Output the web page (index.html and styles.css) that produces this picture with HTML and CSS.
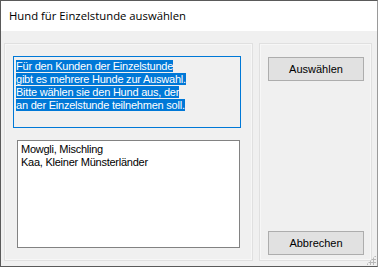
FILE: index.html
```html
<!DOCTYPE html>
<html lang="de">
<head>
    <meta charset="UTF-8">
    <title>Hund für Einzelstunde auswählen</title>
    <link rel="stylesheet" href="styles.css">
</head>
<body>
    <div class="dialog">
        <div class="title-bar">Hund für Einzelstunde auswählen</div>

        <div class="client">
            <div class="panel panel-left">
                <div class="info-box">
                    <span class="sel">Für den Kunden der Einzelstunde</span><br>
                    <span class="sel">gibt es mehrere Hunde zur Auswahl.</span><br>
                    <span class="sel">Bitte wählen sie den Hund aus, der</span><br>
                    <span class="sel">an der Einzelstunde teilnehmen soll.</span>
                </div>

                <ul class="dog-list">
                    <li>Mowgli, Mischling</li>
                    <li>Kaa, Kleiner Münsterländer</li>
                </ul>
            </div>

            <div class="panel panel-right">
                <button class="btn">Auswählen</button>
                <button class="btn">Abbrechen</button>
            </div>
        </div>

        <div class="grip"></div>
    </div>
</body>
</html>
```

FILE: styles.css
```css
* {
    margin: 0;
    padding: 0;
    box-sizing: border-box;
}

body {
    font-family: 'Liberation Sans', Arial, sans-serif;
    font-size: 11px;
    background: #f0f0f0;
}

.dialog {
    position: relative;
    width: 378px;
    height: 267px;
    border: 1px solid #5a5a5a;
    border-right-color: #9a9a9a;
    background: #f0f0f0;
    display: flex;
    flex-direction: column;
}

.title-bar {
    height: 30px;
    background: #fff;
    color: #000;
    font-family: 'Open Sans', 'Noto Sans', sans-serif;
    font-size: 11.3px;
    line-height: 30px;
    padding-left: 8px;
}

.client {
    flex: 1;
    display: flex;
    gap: 6px;
    padding: 12px 5px 5px 3px;
}

.panel {
    border: 1px solid #e0e0e0;
    box-shadow: inset 0 0 0 1px #f7f7f7;
    background: #f0f0f0;
}

.panel-left {
    width: 249px;
    padding: 12px 8px 0 8px;
}

.panel-right {
    flex: 1;
    display: flex;
    flex-direction: column;
    justify-content: space-between;
    padding: 13px 7px 5px 8px;
}

.info-box {
    width: 228px;
    height: 72px;
    border: 1px solid #0078d7;
    background: #f0f0f0;
    padding: 3px 0 0 2px;
    line-height: 13px;
    letter-spacing: -0.22px;
    color: #fff;
}

.sel {
    background: #0078d7;
}

.dog-list {
    list-style: none;
    width: 223px;
    height: 108px;
    margin: 12px 0 0 4px;
    border: 1px solid #828282;
    background: #fff;
    padding: 2px 3px;
    line-height: 13px;
    letter-spacing: -0.25px;
    color: #000;
}

.btn {
    width: 96px;
    height: 24px;
    border: 1px solid #adadad;
    background: #e1e1e1;
    font-family: 'Liberation Sans', Arial, sans-serif;
    font-size: 11px;
    color: #000;
}

.grip {
    position: absolute;
    right: 1px;
    bottom: 1px;
    width: 10px;
    height: 10px;
    background-image: radial-gradient(circle, #b8b8b8 1px, transparent 1.2px);
    background-size: 3px 3px;
    clip-path: polygon(100% 0, 100% 100%, 0 100%);
}
```
